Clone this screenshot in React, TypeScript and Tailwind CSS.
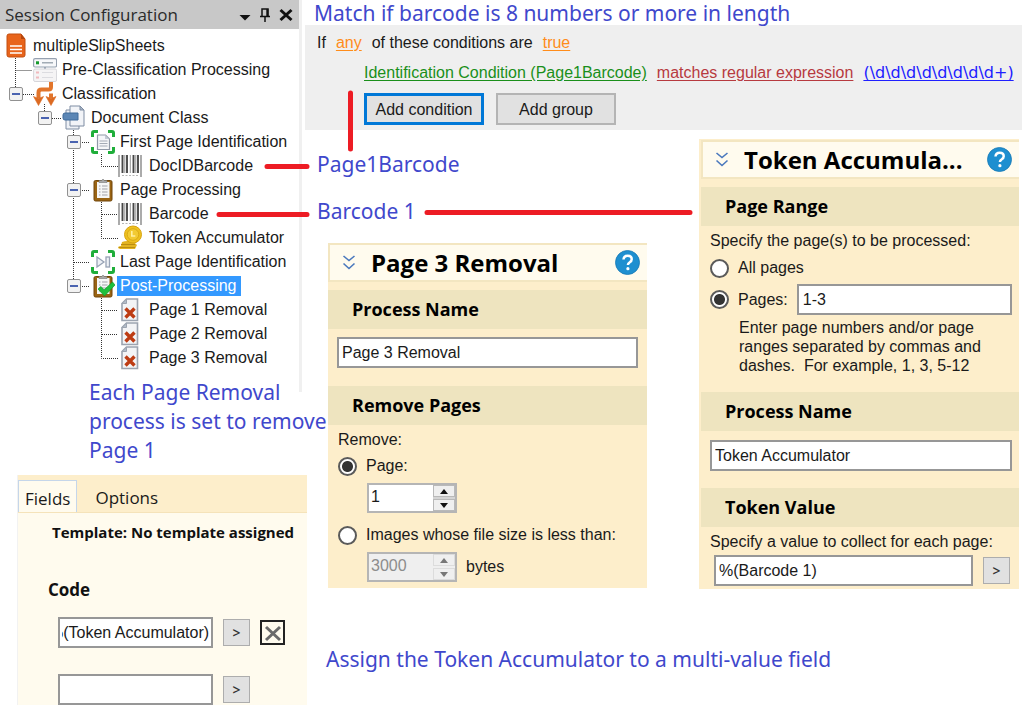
import React, { useEffect, useRef } from "react";

const ui = "font-['Liberation_Sans',Arial,sans-serif] text-[16px] leading-[20px] text-[#1a1a1a]";
const segoe = "font-['Open_Sans','Noto_Sans',sans-serif]";
const note = "font-['Noto_Sans','Open_Sans',sans-serif] text-[21px] leading-[29px] text-[#3f48cc]";
const box = "border-2 border-[#979797] bg-white outline-none";

function FileIcon() {
  return (
    <svg width="20" height="26" viewBox="0 0 20 26" aria-hidden="true">
      <path d="M3 1h12l4 5v16a2 2 0 0 1-2 2H3a2 2 0 0 1-2-2V3a2 2 0 0 1 2-2z" fill="#e8641b" stroke="#c24e10" />
      <path d="M15 1v5h4z" fill="#b5470d" />
      <path d="M4 13h12M4 16.500h12M4 20h12" stroke="#fff" strokeWidth="1.300" />
    </svg>
  );
}

function ServerIcon() {
  return (
    <svg width="24" height="24" viewBox="0 0 24 24" aria-hidden="true">
      <rect x="0.600" y="0.600" width="23" height="8.400" rx="1.500" fill="#f7f8fa" stroke="#96a1b0" strokeWidth="1.200" />
      <rect x="3" y="3.300" width="3" height="3" fill="#159a2c" />
      <path d="M9 4.800h11" stroke="#8b97a3" strokeWidth="1.200" />
      <path d="M12 9v3" stroke="#9aa5b3" strokeWidth="2" />
      <rect x="0.600" y="11" width="23" height="12.500" rx="1.500" fill="#f5f4f5" stroke="#d5d5da" />
      <path d="M3 14.500h3M3 19.500h3" stroke="#f0b9bd" strokeWidth="2" />
      <path d="M9 14.500h11M9 19.500h11" stroke="#dcdce0" strokeWidth="1.200" />
    </svg>
  );
}

function SplitIcon() {
  return (
    <svg width="24" height="24" viewBox="0 0 24 24" aria-hidden="true">
      <path d="M18 0v5q0 2.500-2.500 2.500H8.500Q5.500 7.500 5.500 10.500v6M18 11.500v5" fill="none" stroke="#e2752b" strokeWidth="4" />
      <path d="M0.500 14.500l5 2 5-2L5.500 23.500z M13 14.500l5 2 5-2-5 9z" fill="#dc6a22" stroke="#dc6a22" strokeWidth="0.600" />
    </svg>
  );
}

function ClassIcon() {
  return (
    <svg width="24" height="26" viewBox="0 0 24 26" aria-hidden="true">
      <path d="M4 5h13v19H4z" fill="#eef1f6" stroke="#7e8da3" />
      <path d="M8 1h10l4 4v16H8z" fill="#f2f4f8" stroke="#7e8da3" />
      <path d="M18 1v4h4z" fill="#a9b6c7" stroke="#7e8da3" />
      <path d="M1 10q0-2 2-2h13v7H3q-2 0-2-2z" fill="#5b86b5" stroke="#3f6a9a" />
    </svg>
  );
}

function ScanIcon({ last }: { last?: boolean }) {
  return (
    <svg width="24" height="24" viewBox="0 0 24 24" aria-hidden="true">
      <path d="M1.500 7V3Q1.500 1.500 3 1.500h4M17 1.500h4q1.500 0 1.500 1.500v4M22.500 17v4q0 1.500-1.500 1.500h-4M7 22.500H3Q1.500 22.500 1.500 21v-4" fill="none" stroke="#1fae3a" strokeWidth="3" />
      {last ? (
        <g fill="#eef1f6" stroke="#98a3b5" strokeWidth="1.300">
          <path d="M6 7l7 5-7 5z" />
          <rect x="15" y="7" width="3.500" height="10" />
        </g>
      ) : (
        <>
          <path d="M6.500 5h8l4 4v10.500h-12z" fill="#f5f6f9" stroke="#9099a8" strokeWidth="1.200" />
          <path d="M8.500 11h8M8.500 13.500h8M8.500 16h8" stroke="#a4abb6" />
          <path d="M14 5v4h4z" fill="#c3cad5" />
        </>
      )}
    </svg>
  );
}

function BarcodeIcon() {
  return (
    <svg width="24" height="24" viewBox="0 0 24 24" aria-hidden="true">
      <path d="M1 1v22M23 1v22" stroke="#888" strokeWidth="1.400" />
      <path d="M4.500 1v18M9 1v18M15.500 1v18M20 1v18" stroke="#484848" strokeWidth="1.900" />
      <path d="M6.800 1v18M12.300 1v18M17.800 1v18" stroke="#888" strokeWidth="0.900" />
      <path d="M4 21.500h17" stroke="#b5b5b5" strokeWidth="1.200" strokeDasharray="2 1.500" />
    </svg>
  );
}

function ClipIcon({ check }: { check?: boolean }) {
  return (
    <svg width="24" height="24" viewBox="0 0 24 24" aria-hidden="true">
      <rect x="3" y="2.500" width="18" height="20.500" rx="1.500" fill="#9a6413" stroke="#70450a" />
      <rect x="6" y="4" width="12.500" height="16" fill="#f6f6f6" />
      <path d="M8 4V2.500h2.500Q12 0 13.500 2.500H16V4.500H8z" fill="#a9a9a9" stroke="#777" strokeWidth="0.600" />
      <path d="M8 8h1.500M8 11h1.500M8 14h1.500M8 17h1.500M11 8h5.500M11 11h5.500M11 14h5.500M11 17h5.500" stroke="#a1a1a8" strokeWidth="1.200" />
      {check && <path d="M7 15l3-2.500 3 3.500L21.500 8l2.500 3-10.500 11z" fill="#1fc03c" stroke="#109a2a" strokeWidth="0.700" />}
    </svg>
  );
}

function CoinIcon() {
  return (
    <svg width="26" height="26" viewBox="0 0 26 26" aria-hidden="true">
      <path d="M5 17q5-2 12 0l3 3-2 4H3l-2-1q0-2 3-2z" fill="#e3b420" />
      <path d="M4 19.500h14M2 22.500h16" stroke="#bb8d10" />
      <circle cx="16" cy="9.500" r="8.500" fill="#eec11f" stroke="#d8a30f" />
      <circle cx="16" cy="9.500" r="5.800" fill="#f2ca32" stroke="#d9a915" />
      <path d="M14.800 6v5h3.500" fill="none" stroke="#fff0a0" strokeWidth="1.600" />
    </svg>
  );
}

function RemoveIcon() {
  return (
    <svg width="18" height="24" viewBox="0 0 18 24" aria-hidden="true">
      <path d="M5.500 1H16.500V22.500H1V5.500z" fill="#f3f4f6" stroke="#9ca4b0" strokeWidth="1.600" />
      <path d="M5.500 1v4.500H1z" fill="#b3bdc9" stroke="#9ca4b0" />
      <path d="M4.500 10.500l9 9M13.500 10.500l-9 9" stroke="#bd3c14" strokeWidth="3.400" />
    </svg>
  );
}

type Row = { level: number; label: string; icon: React.ReactNode; open?: boolean; selected?: boolean };

const rows: Row[] = [
  { level: 0, label: "multipleSlipSheets", icon: <FileIcon /> },
  { level: 1, label: "Pre-Classification Processing", icon: <ServerIcon /> },
  { level: 1, label: "Classification", icon: <SplitIcon />, open: true },
  { level: 2, label: "Document Class", icon: <ClassIcon />, open: true },
  { level: 3, label: "First Page Identification", icon: <ScanIcon />, open: true },
  { level: 4, label: "DocIDBarcode", icon: <BarcodeIcon /> },
  { level: 3, label: "Page Processing", icon: <ClipIcon />, open: true },
  { level: 4, label: "Barcode", icon: <BarcodeIcon /> },
  { level: 4, label: "Token Accumulator", icon: <CoinIcon /> },
  { level: 3, label: "Last Page Identification", icon: <ScanIcon last /> },
  { level: 3, label: "Post-Processing", icon: <ClipIcon check />, open: true, selected: true },
  { level: 4, label: "Page 1 Removal", icon: <RemoveIcon /> },
  { level: 4, label: "Page 2 Removal", icon: <RemoveIcon /> },
  { level: 4, label: "Page 3 Removal", icon: <RemoveIcon /> },
];

const indents = ["", "", "pl-[29px]", "pl-[58px]", "pl-[87px]"];

function SessionTree() {
  return (
    <section className="w-[302px] border-r-[3px] border-[#f0f0f0] pb-[22px]">
      <header className="flex h-[29px] items-center bg-[#c8c8c8] pl-[5px] pr-[6px]">
        <h2 className={`${segoe} flex-1 text-[17px] leading-[24px] text-[#2b2b2b]`}>Session Configuration</h2>
        <div className="flex items-center gap-[7px]">
          <button aria-label="Window menu">
            <svg width="12" height="14" viewBox="0 0 12 14"><path d="M0.500 7h11L6 12.500z" fill="#111" /></svg>
          </button>
          <button aria-label="Pin">
            <svg width="14" height="16" viewBox="0 0 14 16"><path d="M4 9V2h6v7M2 9.500h10M7 10v5" fill="none" stroke="#111" strokeWidth="1.500" /><path d="M8.300 2h2v7h-2z" fill="#111" /></svg>
          </button>
          <button aria-label="Close">
            <svg width="14" height="14" viewBox="0 0 14 14"><path d="M1.500 2l11 10M12.500 2l-11 10" stroke="#111" strokeWidth="3" /></svg>
          </button>
        </div>
      </header>
      <div className="relative mt-[5px]">
        <svg className="pointer-events-none absolute left-0 top-0" width="150" height="336" viewBox="0 0 150 336" fill="none" stroke="#333" strokeDasharray="1 1" aria-hidden="true">
          <path d="M15.500 24V60M15.500 36.500H32M23 60.500H34M44.500 70V84M52 84.500H62M73.500 96V252M80 108.500H90M80 156.500H90M74 228.500H90M80 252.500H90M101.500 120V132.500H118M101.500 168V204.500H118M102 180.500H118M101.500 264V324.500H118M102 276.500H118M102 300.500H118" />
        </svg>
        <ul className="relative pl-px">
          {rows.map((r) => (
            <li key={r.label} className={`flex h-[24px] items-center ${indents[r.level]}`}>
              {r.level > 0 && (
                <span className="flex w-[29px] shrink-0 justify-center">
                  {r.open && (
                    <button aria-label={`Collapse ${r.label}`} className="flex size-[14px] items-center justify-center rounded-[2px] border border-[#919191] bg-[#f2f2f2]">
                      <span className="h-[2px] w-[8px] bg-[#4a63b0]" />
                    </button>
                  )}
                </span>
              )}
              <span className={`flex w-[29px] shrink-0 ${r.level === 4 ? "justify-start" : "justify-center"}`}>
                <span className={r.level === 4 ? "flex w-[26px] justify-center" : ""}>{r.icon}</span>
              </span>
              <span className={`${ui} whitespace-nowrap pl-[3px] ${r.selected ? "bg-[#3399ff] pr-[4px] !text-white" : ""}`}>{r.label}</span>
            </li>
          ))}
        </ul>
      </div>
    </section>
  );
}

function ArrowButton({ label }: { label: string }) {
  return (
    <button aria-label={label} className={`${segoe} size-[27px] shrink-0 border border-[#adadad] bg-[#e1e1e1] text-[14px] font-semibold leading-[20px] text-[#333]`}>
      &gt;
    </button>
  );
}

function FieldsPanel() {
  const ref = useRef<HTMLInputElement>(null);
  useEffect(() => {
    if (ref.current) ref.current.scrollLeft = ref.current.scrollWidth;
  }, []);
  return (
    <section className="ml-[17px] w-[290px] border-l border-[#f2f2f2] bg-[#fffbee]">
      <nav role="tablist" className={`${segoe} flex h-[38px] items-end border-b border-[#f5e3ba] bg-[#fdeecb] text-[17px] leading-[24px] text-[#1a1a1a]`}>
        <button role="tab" aria-selected="true" className="h-[32px] border border-b-0 border-[#c5d6ea] bg-[#fffbee] px-[6px] pt-[4px]">Fields</button>
        <button role="tab" aria-selected="false" className="h-[32px] px-[18px] pt-[4px]">Options</button>
      </nav>
      <div className="pl-[30px] pt-[9px]">
        <p className={`${segoe} whitespace-nowrap pl-[4px] text-[15px] font-bold leading-[20px] text-[#111]`}>Template: No template assigned</p>
        <h3 id="code" className={`${segoe} mt-[37px] text-[17px] font-bold leading-[22px] text-[#111]`}>Code</h3>
        <div className="mt-[16px] flex items-center gap-[10px] pl-[10px]">
          <input ref={ref} aria-labelledby="code" defaultValue="%(Token Accumulator)" className={`${ui} ${box} h-[31px] w-[155px] px-[2px]`} />
          <ArrowButton label="Choose first value" />
          <button aria-label="Remove value" className="flex size-[25px] items-center justify-center border-2 border-[#222]">
            <svg width="18" height="18" viewBox="0 0 18 18"><path d="M2 3l14 13M16 3L2 16" stroke="#6a6a6a" strokeWidth="3" /></svg>
          </button>
        </div>
        <div className="mt-[26px] flex items-center gap-[10px] pl-[10px]">
          <input aria-label="Second code value" className={`${ui} ${box} h-[31px] w-[155px] px-[2px]`} />
          <ArrowButton label="Choose second value" />
        </div>
      </div>
    </section>
  );
}

function ConditionPanel() {
  return (
    <section className={`${ui} bg-[#efefef] pb-[5px] pl-[12px] pt-[8px]`}>
      <p className="flex whitespace-nowrap">
        <span>If</span>
        <a href="#any" className="ml-[10px] text-[#ff8c1a] underline underline-offset-2">any</a>
        <span className="ml-[10px]">of these conditions are</span>
        <a href="#true" className="ml-[10px] text-[#ff8c1a] underline underline-offset-2">true</a>
      </p>
      <div className="ml-[47px]">
        <p className="mt-[10px] flex gap-[10px] whitespace-nowrap">
          <a href="#condition" className="text-[#1a8f1a] underline underline-offset-2">Identification Condition (Page1Barcode)</a>
          <a href="#operator" className="text-[#b73a3f] underline underline-offset-2">matches regular expression</a>
          <a href="#pattern" className="font-['DejaVu_Sans',sans-serif] text-[#2020ff] underline underline-offset-2">{"(\\d\\d\\d\\d\\d\\d\\d\\d+)"}</a>
        </p>
        <div className="mt-[10px] flex gap-[12px]">
          <button className="h-[32px] w-[120px] border-[3px] border-[#0078d7] bg-[#e1e1e1] pt-[2px]">Add condition</button>
          <button className="h-[32px] w-[120px] border-2 border-[#b4b4b4] bg-[#e1e1e1] pt-[2px]">Add group</button>
        </div>
      </div>
    </section>
  );
}

function PanelTitle({ children }: { children: React.ReactNode }) {
  return (
    <header className="flex h-[39px] items-center border-2 border-r-0 border-[#f3e6c1] bg-[#fffbee] pl-[12px] pr-[7px]">
      <button aria-label="Collapse panel">
        <svg width="14" height="17" viewBox="0 0 14 17"><path d="M1.500 2L7 6.500 12.500 2M1.500 9.500L7 14.500l5.500-5" fill="none" stroke="#4a78bd" strokeWidth="1.600" /></svg>
      </button>
      <h2 className={`${segoe} ml-[15px] flex-1 whitespace-nowrap pt-px text-[24px] font-bold leading-[32px] text-black`}>{children}</h2>
      <button aria-label="Help">
        <svg width="25" height="25" viewBox="0 0 25 25">
          <circle cx="12.500" cy="12.500" r="12" fill="#1e8fd0" stroke="#1679b5" strokeWidth="0.800" />
          <path d="M8.500 9.500q.3-3.700 4.200-3.700 4 0 4 3.400 0 1.900-2 3.100-1.800 1-1.800 2.700" fill="none" stroke="#fff" strokeWidth="2.500" />
          <circle cx="12.900" cy="18.700" r="1.600" fill="#fff" />
        </svg>
      </button>
    </header>
  );
}

function Band({ id, children }: { id?: string; children: React.ReactNode }) {
  return (
    <h3 id={id} className={`${segoe} h-[39px] bg-[#eee4bf] pl-[24px] text-[18px] font-bold leading-[39px] text-black`}>{children}</h3>
  );
}

function Radio({ name, label, checked }: { name: string; label: string; checked?: boolean }) {
  return (
    <label className="flex items-center gap-[9px] whitespace-nowrap">
      <input type="radio" name={name} defaultChecked={checked} className="size-[19px] shrink-0 appearance-none rounded-full border-2 border-[#5a5a5a] bg-white checked:bg-[radial-gradient(circle,#333_0_5px,white_6px)]" />
      {label}
    </label>
  );
}

function Spinner({ label, value, disabled }: { label: string; value: string; disabled?: boolean }) {
  return (
    <div className={`flex h-[30px] w-[90px] border-2 border-[#b5b5b5] ${disabled ? "bg-[#efefef] text-[#8c8c8c]" : "bg-white"}`}>
      <input aria-label={label} defaultValue={value} disabled={disabled} inputMode="numeric" className="w-[64px] bg-transparent pb-[3px] pl-[2px] outline-none" />
      <div className={`flex flex-1 flex-col gap-[2px] ${disabled ? "bg-[#efefef]" : "bg-[#d4d4d4]"}`}>
        <button aria-label={`Increase ${label}`} disabled={disabled} className={`flex flex-1 items-center justify-center border bg-[#efefef] ${disabled ? "border-[#dcdcdc]" : "border-[#b9b9b9]"}`}>
          <svg width="8" height="5" viewBox="0 0 8 5"><path d="M0 5l4-5 4 5z" fill={disabled ? "#777" : "#111"} /></svg>
        </button>
        <button aria-label={`Decrease ${label}`} disabled={disabled} className={`flex flex-1 items-center justify-center border bg-[#efefef] ${disabled ? "border-[#dcdcdc]" : "border-[#b9b9b9]"}`}>
          <svg width="8" height="5" viewBox="0 0 8 5"><path d="M0 0l4 5 4-5z" fill={disabled ? "#777" : "#111"} /></svg>
        </button>
      </div>
    </div>
  );
}

function RemovalPanel() {
  return (
    <section className={`${ui} ml-[23px] mr-[52px] bg-[#fdeecb] pb-[6px]`}>
      <PanelTitle>Page 3 Removal</PanelTitle>
      <div className="h-[8px]" />
      <Band id="removal-name">Process Name</Band>
      <div className="px-[9px] pb-[9px] pt-[8px]">
        <input aria-labelledby="removal-name" defaultValue="Page 3 Removal" className={`${box} h-[31px] w-full px-[3px]`} />
      </div>
      <div className="h-[9px]" />
      <Band>Remove Pages</Band>
      <div className="pl-[10px] pt-[5px]">
        <p>Remove:</p>
        <div className="mt-[6px]"><Radio name="remove" label="Page:" checked /></div>
        <div className="mt-[7px] pl-[29px]"><Spinner label="page" value="1" /></div>
        <div className="mt-[12px]"><Radio name="remove" label="Images whose file size is less than:" /></div>
        <div className="mt-[7px] flex items-center gap-[9px] pl-[29px]">
          <Spinner label="bytes" value="3000" disabled />
          <span>bytes</span>
        </div>
      </div>
    </section>
  );
}

function TokenPanel() {
  return (
    <section className={`${ui} mr-[3px] mt-[9px] w-[320px] shrink-0 self-start bg-[#fdeecb] pb-[3px] pl-[2px] pt-px`}>
      <PanelTitle>Token Accumula...</PanelTitle>
      <div className="h-[8px]" />
      <Band>Page Range</Band>
      <div className="pl-[9px] pr-[7px] pt-[5px]">
        <p className="whitespace-nowrap">Specify the page(s) to be processed:</p>
        <div className="mt-[7px]"><Radio name="range" label="All pages" /></div>
        <div className="mt-[6px] flex items-center gap-[9px]">
          <Radio name="range" label="Pages:" checked />
          <input aria-label="Pages to process" defaultValue="1-3" className={`${box} h-[31px] min-w-0 flex-1 px-[4px]`} />
        </div>
        <p className="mt-[3px] whitespace-pre pl-[29px] leading-[19px]">{"Enter page numbers and/or page\nranges separated by commas and\ndashes.  For example, 1, 3, 5-12"}</p>
      </div>
      <div className="h-[17px]" />
      <Band id="token-name">Process Name</Band>
      <div className="pb-[9px] pl-[9px] pr-[7px] pt-[9px]">
        <input aria-labelledby="token-name" defaultValue="Token Accumulator" className={`${box} h-[31px] w-full px-[3px]`} />
      </div>
      <div className="h-[8px]" />
      <Band>Token Value</Band>
      <div className="pl-[9px] pr-[9px] pt-[5px]">
        <label htmlFor="token-value" className="whitespace-nowrap">Specify a value to collect for each page:</label>
        <div className="mt-[3px] flex items-center gap-[10px] pl-[4px]">
          <input id="token-value" defaultValue="%(Barcode 1)" className={`${box} h-[31px] min-w-0 flex-1 px-[3px]`} />
          <ArrowButton label="Choose token" />
        </div>
      </div>
    </section>
  );
}

export default function App() {
  return (
    <main className="relative flex bg-white">
      <div className="w-[305px] shrink-0">
        <SessionTree />
        <p className={`${note} -mt-[14px] whitespace-pre pl-[89px]`}>{"Each Page Removal\nprocess is set to remove\nPage 1"}</p>
        <div className="h-[10px]" />
        <FieldsPanel />
      </div>
      <div className="min-w-0 flex-1">
        <p className={`${note} h-[25px] whitespace-nowrap pl-[9px] !leading-[26px]`}>Match if barcode is 8 numbers or more in length</p>
        <ConditionPanel />
        <div className="flex">
          <div className="min-w-0 flex-1">
            <p className={`${note} pl-[12px] pt-[20px]`}>Page1Barcode</p>
            <p className={`${note} pb-[17px] pl-[12px] pt-[18px]`}>Barcode 1</p>
            <RemovalPanel />
            <p className={`${note} whitespace-nowrap pl-[21px] pt-[57px]`}>Assign the Token Accumulator to a multi-value field</p>
          </div>
          <TokenPanel />
        </div>
      </div>
      <svg className="pointer-events-none absolute left-0 top-0" width="700" height="230" viewBox="0 0 700 230" stroke="#ed1c24" strokeWidth="5" strokeLinecap="round" aria-hidden="true">
        <path d="M267 166.500H307M219 214.500H307M427 212.500H690M350.500 93V149" />
      </svg>
    </main>
  );
}
